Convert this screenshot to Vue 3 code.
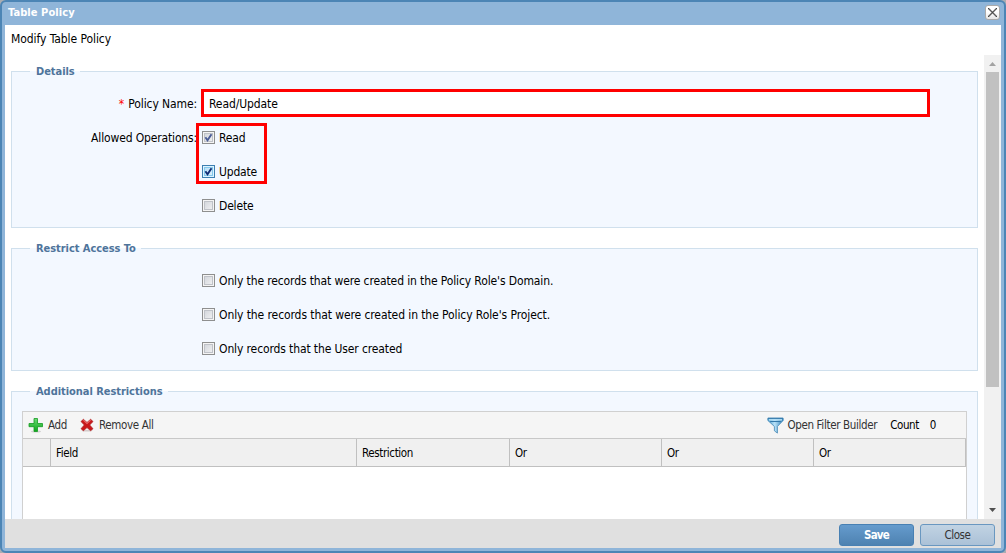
<script setup>
const operations = [
  { label: 'Read', state: 'locked' },
  { label: 'Update', state: 'checked' },
  { label: 'Delete', state: '' },
]
const restrictions = [
  { label: "Only the records that were created in the Policy Role's Domain.", key: 'domain' },
  { label: "Only the records that were created in the Policy Role's Project.", key: 'project' },
  { label: 'Only records that the User created', key: 'user' },
]
const columns = ['', 'Field', 'Restriction', 'Or', 'Or', 'Or']
</script>

<template>
  <div class="window">
    <header class="titlebar">
      <span class="title">Table Policy</span>
      <button class="close-tool" aria-label="Close window">
        <svg width="13" height="13" viewBox="0 0 13 13">
          <path d="M2.5 2.5l8 8M10.5 2.5l-8 8" stroke="#5a5a5a" stroke-width="1.4" />
          <path d="M2 2h1v1h-1zM10 2h1v1h-1zM2 10h1v1h-1zM10 10h1v1h-1zM6 6h1v1h-1z" fill="#444" />
        </svg>
      </button>
    </header>
    <div class="caption"><span class="t-caption">Modify Table Policy</span></div>
    <div class="scroller">
      <main class="content">
        <section class="fieldset details">
          <h2 class="legend l-details">Details</h2>
          <div class="row name-row">
            <label class="label"><i class="star">*</i><span class="t-name">Policy Name:</span></label>
            <div class="input"><span class="t-input">Read/Update</span></div>
          </div>
          <div class="row ops-row">
            <label class="label"><span class="t-ops">Allowed Operations:</span></label>
            <div class="checks">
              <div v-for="op in operations" :key="op.label" class="check-row">
                <span class="box" :class="op.state">
                  <svg v-if="op.state" width="11" height="11" viewBox="0 0 11 11">
                    <path d="M2.4 5.2 4.5 8.2 8.5 2.2" fill="none" stroke="currentColor" stroke-width="1.9" />
                  </svg>
                </span>
                <span :class="'t-' + op.label.toLowerCase()">{{ op.label }}</span>
              </div>
              <div class="marker"></div>
            </div>
          </div>
        </section>
        <section class="fieldset access">
          <h2 class="legend l-access">Restrict Access To</h2>
          <div class="checks">
            <div v-for="r in restrictions" :key="r.key" class="check-row">
              <span class="box"></span><span :class="'t-' + r.key">{{ r.label }}</span>
            </div>
          </div>
        </section>
        <section class="fieldset additional">
          <h2 class="legend l-additional">Additional Restrictions</h2>
          <div class="grid">
            <div class="toolbar">
              <svg class="ico-add" width="16" height="16" viewBox="0 0 16 16">
                <defs>
                  <linearGradient id="plus" x1="0" y1="0" x2="0" y2="1">
                    <stop offset="0" stop-color="#6cdb74" /><stop offset="1" stop-color="#0ea51c" />
                  </linearGradient>
                </defs>
                <ellipse cx="8" cy="14.6" rx="5" ry="1" fill="#d2d2d2" />
                <path d="M6 1.5h3.5v5h5v3.2h-5v4.8h-3.5v-4.8h-5v-3.2h5z" fill="url(#plus)" stroke="#159a22" stroke-width=".8" />
              </svg>
              <span class="t-add">Add</span>
              <svg class="ico-remove" width="14" height="14" viewBox="0 0 14 14">
                <ellipse cx="7" cy="12.8" rx="5.6" ry=".8" fill="#d4cccc" />
                <path d="M3.4 1.3 7 4.5l3.6-3.2 2.4 2.2L9.7 7l3.3 3.7-2.4 2L7 9.6l-3.6 3.1-2.4-2L4.3 7 1 3.5z" fill="#c9191b" stroke="#a91b1d" stroke-width=".7" />
                <path d="M3.4 2.2 7 5.4l3.6-3.2" fill="none" stroke="#e76a6a" stroke-width="1.1" />
              </svg>
              <span class="t-remove">Remove All</span>
              <span class="spacer"></span>
              <svg class="ico-filter" width="17" height="17" viewBox="0 0 17 17">
                <defs>
                  <linearGradient id="cone" x1="0" y1="0" x2="1" y2="0">
                    <stop offset="0" stop-color="#4c9fd0" /><stop offset=".45" stop-color="#b9e2f8" /><stop offset="1" stop-color="#2f80b8" />
                  </linearGradient>
                </defs>
                <path d="M.8 1.2h15.4v2.2L10.4 9.5v6.6l-3-2.3V9.5L.8 3.4z" fill="url(#cone)" stroke="#4287b5" stroke-width=".8" />
                <path d="M1 1.3h15M3.2 4.5h10.6" fill="none" stroke="#3177a9" stroke-width="1" />
                <path d="M2 2.8h13" stroke="#b5dff5" stroke-width="1.4" />
              </svg>
              <span class="t-filter">Open Filter Builder</span>
              <span class="t-count">Count</span>
              <span class="t-zero">0</span>
            </div>
            <div class="columns">
              <div v-for="(c, i) in columns" :key="i" class="col"><span :class="'t-col' + i">{{ c }}</span></div>
            </div>
            <div class="grid-body"></div>
          </div>
        </section>
      </main>
      <div class="scrollbar">
        <svg class="arrow" width="17" height="17" viewBox="0 0 17 17"><path d="M5 11 8.5 7 12 11z" fill="#a3a3a3" /></svg>
        <div class="thumb"></div>
        <svg class="arrow" width="17" height="17" viewBox="0 0 17 17"><path d="M5 6h7L8.5 10z" fill="#505050" /></svg>
      </div>
    </div>
    <footer class="footer">
      <button class="btn primary"><span class="t-save">Save</span></button>
      <button class="btn"><span class="t-close">Close</span></button>
    </footer>
  </div>
</template>

<style>
body { margin: 0; background: #a9adb2; overflow: hidden; }
</style>

<style scoped>
* { box-sizing: border-box; }
.window {
  width: 1006px; height: 553px; display: flex; flex-direction: column;
  border: 2px solid #4c85b5; border-radius: 6px; background: #8fb5d9;
  padding: 0 3px 3px; overflow: hidden;
  font: 12px/14px Tahoma, "DejaVu Sans Condensed", "DejaVu Sans", sans-serif;
  font-stretch: condensed; color: #000; white-space: nowrap;
}
.titlebar { height: 23px; flex: none; display: flex; justify-content: space-between; align-items: flex-start; padding: 3px 1px 0 3px; }
.title { color: #fff; font-weight: bold; font-size: 11px; letter-spacing: .08px; margin-top: 1px; }
.close-tool { width: 15px; height: 15px; margin: 0; padding: 0; border: 1px solid #aaa; border-radius: 3px; background: linear-gradient(#fff 45%, #e6e6e6); display: flex; align-items: center; justify-content: center; }
.close-tool svg { flex: none; }
.caption { height: 30px; flex: none; background: #fff; padding: 7px 6px 0; }
.scroller { height: 464px; flex: none; display: flex; background: #fff; overflow: hidden; }
.content { flex: 1; min-width: 0; padding: 16px 6px 0; }
.fieldset { border: 1px solid #d0e0ed; background: #f3f8ff; margin-bottom: 20px; }
.details { height: 157px; }
.access { height: 123px; }
.additional { height: 200px; }
.legend {
  margin: -8px 0 0 18px; padding: 0 5px 0 6px; height: 15px; width: max-content;
  font-size: 11px; line-height: 15px; font-weight: bold; color: #4e749b; letter-spacing: -.05px;
  background: linear-gradient(#fff 7px, #f3f8ff 7px);
}
.row { display: flex; }
.name-row { margin-top: 10px; height: 28px; }
.label { width: 185px; margin-right: -1px; display: flex; justify-content: flex-end; padding-top: 8px; }
.star { color: #f00; font-style: normal; margin-right: 4px; }
.input { margin-left: 5px; width: 729px; height: 28px; border: 3px solid #f00; background: #fff; padding: 5px; }
.ops-row { margin-top: 6px; }
.ops-row .checks { margin-left: 0; padding-left: 6px; padding-top: 8px; position: relative; }
.marker { position: absolute; left: 0; top: 0; width: 71px; height: 61px; border: 3px solid #f00; }
.check-row { height: 13px; margin-bottom: 21px; display: flex; align-items: center; gap: 4px; }
.access .checks { padding: 18px 0 0 190px; }
.box {
  width: 13px; height: 13px; border: 1px solid #8e8f8f; flex: none; display: flex;
  background: linear-gradient(135deg, #cdd1d7, #f5f5f6) padding-box; box-shadow: inset 0 0 0 1px #f4f4f4, inset 0 0 0 2px #bfc2c8;
}
.box.locked { color: #4b5d97; }
.box.checked { border-color: #3c7fb1; color: #122e75; background: linear-gradient(135deg, #b0daf6, #e5f4fc); box-shadow: inset 0 0 0 1px #def3ff, inset 0 0 0 2px #84c9ec; }
.grid { margin: 12px 10px 0; height: 180px; border: 1px solid #d0d0d0; background: #fff; }
.toolbar { height: 26px; background: #f5f5f5; display: flex; align-items: center; color: #333; padding: 0 30px 0 5px; font-size: 11.5px; letter-spacing: -.34px; }
.ico-add { margin-right: 4px; }
.ico-remove { margin: 0 5px 0 13px; }
.ico-filter { margin-right: 3px; }
.spacer { flex: 1; }
.t-count { margin-left: 13px; color: #000; letter-spacing: -.45px; }
.t-zero { margin-left: 11px; color: #000; }
.columns { display: grid; grid-template-columns: 28px 306px 153px 152px 152px 152px; height: 29px; background: #f0f0f0; border-top: 1px solid #c8c8c8; border-bottom: 1px solid #c0c0c0; }
.col { border-right: 1px solid #c0c0c0; padding: 7px 5px 0; font-size: 11.5px; letter-spacing: -.38px; }
.scrollbar { width: 17px; flex: none; background: #f1f1f1; display: flex; flex-direction: column; }
.arrow { flex: none; }
.thumb { width: 13px; height: 315px; margin: 0 2px auto; background: #c1c1c1; }
.footer { height: 29px; flex: none; background: #e0e0e0; display: flex; justify-content: flex-end; gap: 6px; padding: 5px 6px 0; }
.btn { width: 75px; height: 22px; border: 1px solid #6997c0; border-radius: 3px; background: linear-gradient(#c1d3e3, #abc1d7); font: inherit; font-size: 11.5px; color: #333; padding: 0; }
.btn.primary { background: linear-gradient(#659bcd, #4e82b1); border-color: #4880b3; color: #fff; font-weight: bold; }
.t-domain, .t-user { letter-spacing: -.12px; }
.t-project { letter-spacing: -.09px; }
.t-caption { letter-spacing: -.07px; }
.t-name { letter-spacing: -.1px; }
.t-ops { letter-spacing: -.15px; }
.t-read, .t-update, .t-delete { letter-spacing: -.18px; }
.t-input { letter-spacing: -.1px; }
.t-close { letter-spacing: -.4px; }
.t-save { letter-spacing: -.8px; }
</style>
